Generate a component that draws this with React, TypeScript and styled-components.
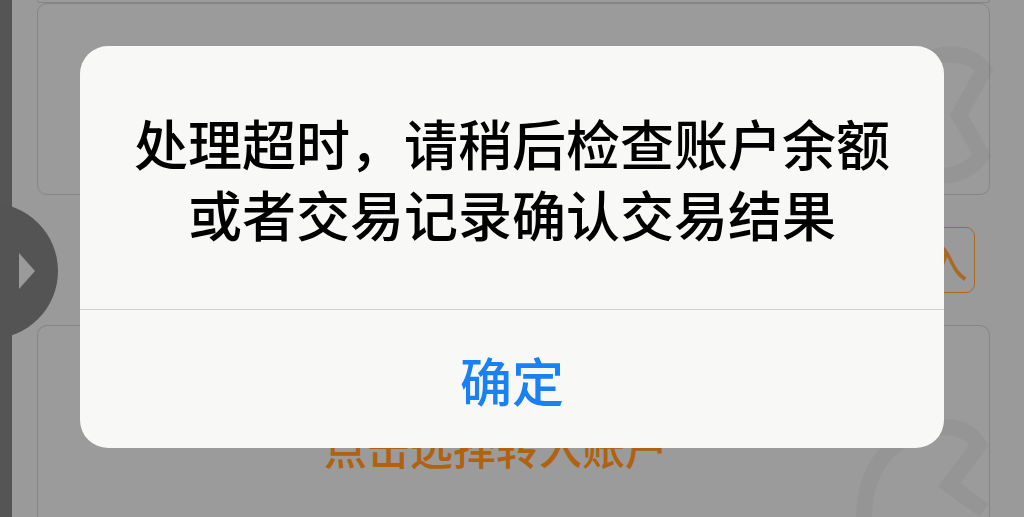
import React from 'react';
import styled, { createGlobalStyle } from 'styled-components';

const GlobalStyle = createGlobalStyle`
  html,
  body,
  #root {
    height: 100%;
  }

  body {
    margin: 0;
    overflow: hidden;
    background: #9a9a9a;
    font-family: 'Noto Sans CJK SC', 'Noto Sans', sans-serif;
  }
`;

const Page = styled.div`
  position: relative;
  display: flex;
  height: 100%;
  background: #9a9a9a;
`;

const Rail = styled.div`
  width: 12px;
  flex-shrink: 0;
  background: #555555;
`;

const Content = styled.div`
  flex: 1;
  display: flex;
  flex-direction: column;
  padding: 0 34px 0 25px;
`;

const Card = styled.div<{ $height?: number; $stub?: boolean }>`
  box-sizing: border-box;
  height: ${(p) => (p.$height ? `${p.$height}px` : 'auto')};
  flex: ${(p) => (p.$height ? 'none' : 1)};
  border: 1.5px solid #858585;
  border-top-width: ${(p) => (p.$stub ? 0 : '1.5px')};
  border-radius: ${(p) => (p.$stub ? '0 0 10px 10px' : '10px')};
  background: #9b9b9b;
`;

const ActionRow = styled.div`
  height: 130px;
  display: flex;
  align-items: center;
  justify-content: flex-end;
  padding-right: 15px;
`;

const OutlineButton = styled.div`
  box-sizing: border-box;
  width: 100px;
  height: 66px;
  border: 1.5px solid #a86a22;
  border-radius: 9px;
  color: #a86a22;
  font-size: 43px;
  line-height: 62px;
  text-align: right;
  padding-right: 6px;
  overflow: hidden;
  white-space: nowrap;
`;

const BottomCard = styled(Card)`
  padding: 99px 0 0 286px;
  border-bottom: none;
  border-radius: 10px 10px 0 0;
`;

const PickText = styled.div`
  color: #b0620f;
  font-size: 43px;
  line-height: 43px;
  font-weight: 500;
`;

const Handle = styled.div`
  position: absolute;
  left: -10px;
  top: 203px;
  width: 68px;
  height: 136px;
  border-radius: 0 68px 68px 0;
  background: #545454;
  display: flex;
  align-items: center;
  padding-left: 29px;
  box-sizing: border-box;
`;

const Arrow = styled.div`
  width: 0;
  height: 0;
  border-top: 18px solid transparent;
  border-bottom: 18px solid transparent;
  border-left: 16px solid #9a9a9a;
`;

const Watermark = styled.svg`
  position: absolute;
  right: 30px;
  pointer-events: none;
`;

const Overlay = styled.div`
  position: fixed;
  inset: 0;
  display: flex;
  justify-content: center;
  align-items: flex-start;
  padding-top: 46px;
`;

const Dialog = styled.div`
  width: 864px;
  height: 402px;
  display: flex;
  flex-direction: column;
  border-radius: 28px;
  overflow: hidden;
  background: #f8f8f7;
`;

const Message = styled.div`
  flex: 1;
  display: flex;
  flex-direction: column;
  align-items: center;
  justify-content: center;
  border-bottom: 1px solid #cfcfcf;
`;

const MessageLine = styled.div`
  color: #000000;
  font-size: 54px;
  line-height: 71px;
  font-weight: 500;
  white-space: nowrap;
`;

const ConfirmButton = styled.div`
  height: 138px;
  display: flex;
  align-items: center;
  justify-content: center;
  color: #1a80f5;
  font-size: 52px;
  font-weight: 500;
  cursor: pointer;
`;

const App = () => {
  return (
    <React.Fragment>
      <GlobalStyle />
      <Page>
        <Rail />
        <Content>
          <Card $height={3} $stub />
          <Card $height={192} />
          <ActionRow>
            <OutlineButton>转入</OutlineButton>
          </ActionRow>
          <BottomCard>
            <PickText>点击选择转入账户</PickText>
          </BottomCard>
        </Content>
        <Handle>
          <Arrow />
        </Handle>
        <Watermark style={{ top: 40 }} width="80" height="150" viewBox="0 0 80 150">
          <path
            d="M10 20 Q50 5 70 30 L45 75 L68 115 Q50 140 15 135"
            fill="none"
            stroke="rgba(0,0,0,0.035)"
            strokeWidth="16"
          />
        </Watermark>
        <Watermark style={{ top: 410 }} width="150" height="110" viewBox="0 0 150 110">
          <path
            d="M20 110 Q20 40 80 20 Q120 10 135 35 L105 75 L140 100"
            fill="none"
            stroke="rgba(0,0,0,0.035)"
            strokeWidth="16"
          />
        </Watermark>
      </Page>
      <Overlay>
        <Dialog>
          <Message>
            <MessageLine>处理超时，请稍后检查账户余额</MessageLine>
            <MessageLine>或者交易记录确认交易结果</MessageLine>
          </Message>
          <ConfirmButton>确定</ConfirmButton>
        </Dialog>
      </Overlay>
    </React.Fragment>
  );
};

export default App;
